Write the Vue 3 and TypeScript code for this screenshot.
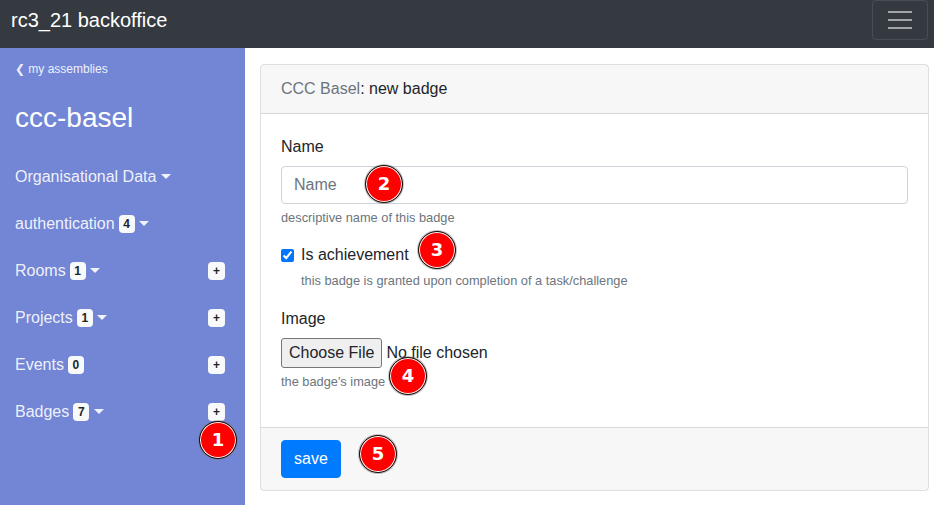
<script setup lang="ts">
interface NavItem { label: string; badge?: number; caret: boolean; add: boolean }
const items: NavItem[] = [
  { label: 'Organisational Data', caret: true, add: false },
  { label: 'authentication', badge: 4, caret: true, add: false },
  { label: 'Rooms', badge: 1, caret: true, add: true },
  { label: 'Projects', badge: 1, caret: true, add: true },
  { label: 'Events', badge: 0, caret: false, add: true },
  { label: 'Badges', badge: 7, caret: true, add: true },
]
const marks = [
  { n: 1, x: 218, y: 440 },
  { n: 2, x: 384, y: 184 },
  { n: 3, x: 437, y: 250 },
  { n: 4, x: 408, y: 376 },
  { n: 5, x: 378, y: 454 },
]
</script>

<template>
  <div class="page">
    <header class="navbar">
      <a class="brand">rc3_21 backoffice</a>
      <button class="toggler" type="button" aria-label="menu">
        <span></span><span></span><span></span>
      </button>
    </header>
    <div class="wrapper">
      <nav class="sidebar">
        <a class="back">❮ my assemblies</a>
        <h3 class="title">ccc-basel</h3>
        <ul class="menu">
          <li v-for="item in items" :key="item.label" class="menu-item">
            <span class="menu-label">{{ item.label }}</span>
            <span v-if="item.badge !== undefined" class="badge">{{ item.badge }}</span>
            <span v-if="item.caret" class="caret"></span>
            <span v-if="item.add" class="add">+</span>
          </li>
        </ul>
      </nav>
      <main class="content">
        <section class="card">
          <div class="card-header"><span class="muted">CCC Basel</span>: new badge</div>
          <div class="card-body">
            <div class="group">
              <label class="label" for="name">Name</label>
              <input id="name" class="control" type="text" placeholder="Name" />
              <small class="hint">descriptive name of this badge</small>
            </div>
            <div class="group check">
              <div class="check-row">
                <input id="ach" class="check-input" type="checkbox" checked />
                <label for="ach">Is achievement</label>
              </div>
              <small class="hint">this badge is granted upon completion of a task/challenge</small>
            </div>
            <div class="group">
              <label class="label" for="img">Image</label>
              <input id="img" class="file" type="file" />
              <small class="hint">the badge's image</small>
            </div>
          </div>
          <div class="card-footer">
            <button class="save" type="button">save</button>
          </div>
        </section>
      </main>
    </div>
    <div
      v-for="m in marks"
      :key="m.n"
      class="mark"
      :style="{ left: m.x - 19 + 'px', top: m.y - 19 + 'px' }"
    >{{ m.n }}</div>
  </div>
</template>

<style>
html, body { margin: 0; overflow: hidden; }
</style>

<style scoped>
* { box-sizing: border-box; }
.page {
  position: relative;
  width: 934px;
  height: 505px;
  overflow: hidden;
  display: flex;
  flex-direction: column;
  font-family: "Liberation Sans", Arial, sans-serif;
  font-size: 16px;
  line-height: 1.5;
  color: #212529;
  background: #fff;
}
.navbar {
  height: 48px;
  flex: none;
  background: #343a40;
  display: flex;
  justify-content: space-between;
  align-items: flex-start;
  padding: 0 6px 0 11px;
}
.brand { font-size: 20px; line-height: 40px; color: #fff; }
.toggler {
  width: 56px;
  height: 40px;
  background: transparent;
  border: 1px solid rgba(255,255,255,.1);
  border-radius: 4px;
  display: flex;
  flex-direction: column;
  align-items: center;
  justify-content: center;
  gap: 6px;
  padding: 0;
}
.toggler span { display: block; width: 24px; height: 2px; background: rgba(255,255,255,.55); }
.wrapper { flex: 1; display: flex; min-height: 0; }
.sidebar { width: 245px; flex: none; background: #7386d5; color: #fff; padding: 10px 20px 10px 15px; }
.back { display: block; font-size: 12px; line-height: 22px; color: rgba(255,255,255,.9); }
.title { margin: 21px 0 0; font-size: 28px; font-weight: 500; line-height: 34px; color: #fff; }
.menu { list-style: none; margin: 18px 0 0; padding: 0; }
.menu-item { display: flex; align-items: center; height: 47px; color: rgba(255,255,255,.9); }
.badge {
  margin: 1px 0 0 4px;
  min-width: 16px;
  height: 18px;
  padding: 0 4px;
  border-radius: 4px;
  background: #f8f9fa;
  color: #212529;
  font-size: 12px;
  font-weight: 700;
  line-height: 18px;
  text-align: center;
}
.caret {
  margin-left: 4.5px;
  width: 0;
  height: 0;
  border-top: 5px solid currentColor;
  border-left: 5px solid transparent;
  border-right: 5px solid transparent;
}
.add {
  margin: 1px 0 0 auto;
  width: 17px;
  height: 18px;
  border-radius: 4px;
  background: #f8f9fa;
  color: #212529;
  font-size: 12px;
  font-weight: 700;
  line-height: 18px;
  text-align: center;
}
.content { flex: 1; min-width: 0; padding: 16px 5px 14px 15px; }
.card {
  height: 427px;
  display: flex;
  flex-direction: column;
  border: 1px solid rgba(0,0,0,.125);
  border-radius: 4px;
}
.card-header {
  height: 49px;
  flex: none;
  padding: 12px 20px;
  background: rgba(0,0,0,.03);
  border-bottom: 1px solid rgba(0,0,0,.125);
}
.muted { color: #6c757d; }
.card-body { flex: 1; min-height: 0; padding: 21px 20px 0; }
.group { margin-bottom: 17px; }
.label { display: block; margin-bottom: 7px; }
.control {
  display: block;
  width: 100%;
  height: 38px;
  padding: 6px 12px;
  font: inherit;
  color: #495057;
  border: 1px solid #ced4da;
  border-radius: 4px;
  background: #fff;
}
.control::placeholder { color: #6c757d; opacity: 1; }
.hint { display: block; margin-top: 4px; font-size: 12.8px; line-height: 19px; color: #6c757d; }
.check { padding-left: 20px; position: relative; margin-top: -1px; }
.check-row { display: flex; align-items: center; }
.check-input { position: absolute; left: 0; width: 13px; height: 13px; margin: 0; }
.file { display: block; width: 100%; height: 30px; font: inherit; color: inherit; }
.file::file-selector-button {
  height: 30px;
  padding: 0 7px;
  font: inherit;
  color: #212529;
  background: #efefef;
  border: 1px solid #767676;
  border-radius: 3px;
}
.card-footer {
  height: 63px;
  flex: none;
  padding: 12px 20px;
  background: rgba(0,0,0,.03);
  border-top: 1px solid rgba(0,0,0,.125);
}
.save {
  height: 38px;
  padding: 6px 12px;
  font: inherit;
  color: #fff;
  background: #007bff;
  border: 1px solid #007bff;
  border-radius: 4px;
}
.mark {
  position: absolute;
  width: 38px;
  height: 38px;
  border-radius: 50%;
  background: #f00;
  border: 1px solid #111;
  box-shadow: inset 0 0 0 1px #fff, 0 0 0 1px rgba(120,120,120,.45);
  color: #fff;
  font-family: "DejaVu Sans", sans-serif;
  font-size: 18px;
  font-weight: 700;
  line-height: 36px;
  text-align: center;
}
</style>
